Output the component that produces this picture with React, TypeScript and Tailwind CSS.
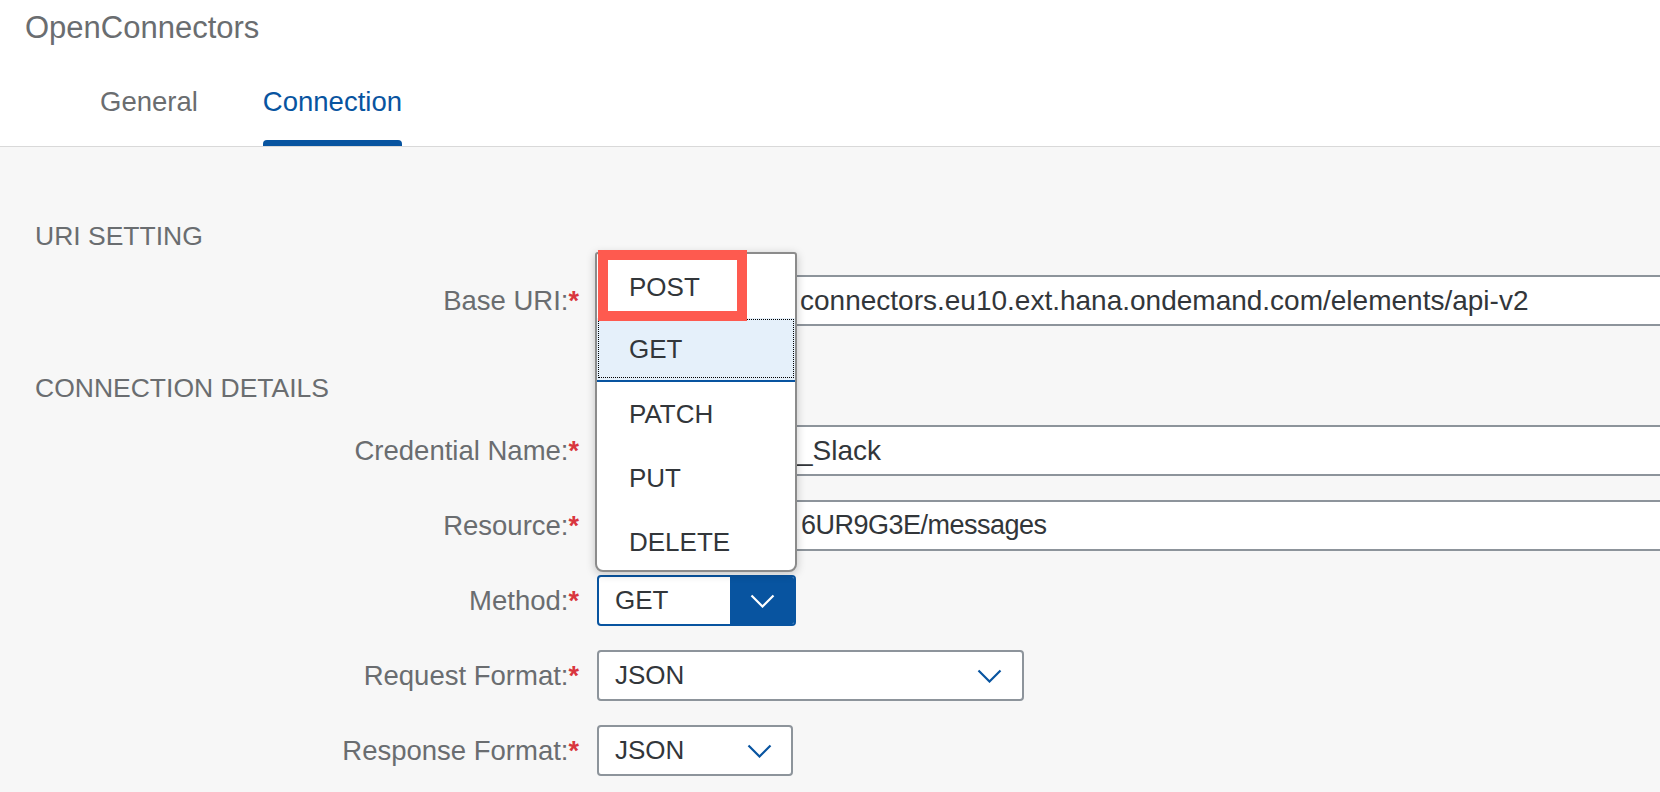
import React from "react";

function Chevron({ className }: { className?: string }) {
  return (
    <svg width="25" height="14" viewBox="0 0 25 14" className={className}>
      <path d="M1.5 1.5 L12.5 12.5 L23.5 1.5" fill="none" stroke="currentColor" strokeWidth="2.2" />
    </svg>
  );
}

function Label({ children }: { children: React.ReactNode }) {
  return (
    <div className="text-right text-[27.5px] leading-[32px] text-[#6a6d70] whitespace-nowrap">
      {children}
      <span className="text-[#d9363e] font-bold text-[27px]">*</span>
    </div>
  );
}

function TextInput({ children }: { children: React.ReactNode }) {
  return (
    <div className="w-[1100px] h-[51px] bg-white border-2 border-[#8d949b] rounded-[4px] flex items-center text-[#32363a] whitespace-nowrap overflow-hidden">
      {children}
    </div>
  );
}

export default function App() {
  return (
    <div className="w-[1660px] h-[792px] overflow-hidden bg-[#f7f7f7] font-['Liberation_Sans',Arial,sans-serif]">
      <header className="h-[147px] bg-white border-b border-[#d9d9d9] flex flex-col">
        <div className="pl-[25px] pt-[8px] h-[48px] text-[31px] leading-[40px] text-[#6a6d70]">OpenConnectors</div>
        <div className="flex-1 flex items-end pl-[100px] gap-[65px]">
          <div className="flex flex-col">
            <span className="text-[27.5px] leading-[40px] text-[#6a6d70] mb-[24px]">General</span>
          </div>
          <div className="flex flex-col">
            <span className="text-[27.5px] leading-[40px] text-[#0854a0] mb-[18px]">Connection</span>
            <div className="h-[6px] bg-[#0854a0] rounded-t-[4px]" />
          </div>
        </div>
      </header>

      <main className="relative pl-[35px]">
        <div className="pt-[73px] text-[26.5px] leading-[32px] text-[#6a6d70]">URI SETTING</div>

        <div className="mt-[23px] grid grid-cols-[544px_1fr] gap-x-[18px] items-center h-[51px]">
          <Label>Base URI:</Label>
          <TextInput>
            <span className="pl-[201px] text-[28px]">connectors.eu10.ext.hana.ondemand.com/elements/api-v2</span>
          </TextInput>
        </div>

        <div className="mt-[46px] text-[26.5px] leading-[32px] text-[#6a6d70]">CONNECTION DETAILS</div>

        <div className="mt-[21px] grid grid-cols-[544px_1fr] gap-x-[18px] gap-y-[24px] items-center auto-rows-[51px]">
          <Label>Credential Name:</Label>
          <TextInput>
            <span className="pl-[198px] text-[28px]">_Slack</span>
          </TextInput>

          <Label>Resource:</Label>
          <TextInput>
            <span className="pl-[202px] text-[27px] tracking-[-0.5px]">6UR9G3E/messages</span>
          </TextInput>

          <Label>Method:</Label>
          <div className="w-[199px] h-[51px] border-2 border-[#0854a0] rounded-[4px] flex overflow-hidden bg-white">
            <div className="flex-1 pl-[16px] flex items-center text-[26px] text-[#32363a]">GET</div>
            <div className="w-[64px] bg-[#0854a0] flex items-center justify-center text-white">
              <Chevron />
            </div>
          </div>

          <Label>Request Format:</Label>
          <div className="w-[427px] h-[51px] border-2 border-[#8d949b] rounded-[4px] bg-white flex items-center justify-between pl-[16px] pr-[20px]">
            <span className="text-[26px] text-[#32363a]">JSON</span>
            <Chevron className="text-[#0854a0]" />
          </div>

          <Label>Response Format:</Label>
          <div className="w-[196px] h-[51px] border-2 border-[#8d949b] rounded-[4px] bg-white flex items-center justify-between pl-[16px] pr-[19px]">
            <span className="text-[26px] text-[#32363a]">JSON</span>
            <Chevron className="text-[#0854a0]" />
          </div>
        </div>

        {/* Dropdown popover */}
        <div className="absolute left-[595px] top-[105px] w-[202px] bg-white border-2 border-[#8b8b8b] rounded-t-[3px] rounded-b-[8px] shadow-[0_2px_10px_rgba(0,0,0,0.22)] overflow-hidden">
          <div className="h-[64px] flex items-center pl-[32px] pt-[2px] text-[26px] text-[#32363a]">POST</div>
          <div className="relative h-[64px] flex items-center pl-[32px] text-[26px] text-[#32363a] bg-[#e5f0fa] border-b-2 border-[#0854a0]">
            GET
            <span className="absolute left-[1px] right-[1px] top-[1px] bottom-[2px] border border-dotted border-black" />
          </div>
          <div className="h-[64px] flex items-center pl-[32px] text-[26px] text-[#32363a]">PATCH</div>
          <div className="h-[64px] flex items-center pl-[32px] text-[26px] text-[#32363a]">PUT</div>
          <div className="h-[60px] flex items-center pl-[32px] pt-[4px] text-[26px] text-[#32363a]">DELETE</div>
        </div>

        {/* Highlight box */}
        <div className="absolute left-[598px] top-[103px] w-[149px] h-[71px] border-[10px] border-[#fe5a4f]" />
      </main>
    </div>
  );
}
